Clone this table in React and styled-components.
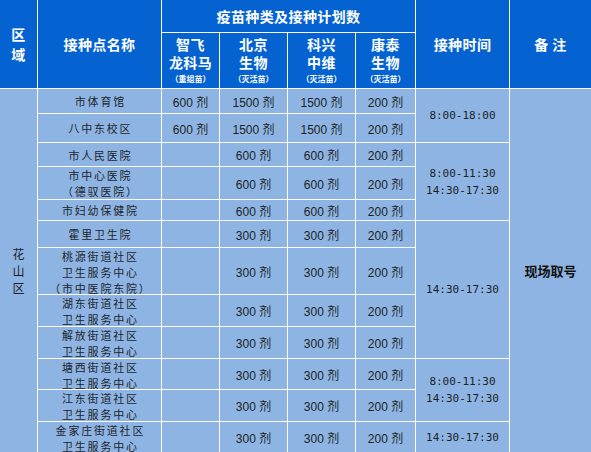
import React from "react";
import styled, { createGlobalStyle } from "styled-components";

const GlobalStyle = createGlobalStyle`
  html, body {
    margin: 0;
    padding: 0;
    background: #ffffff;
  }
  body {
    font-family: "Noto Sans CJK SC", "Noto Sans", sans-serif;
  }
`;

const BLUE = "#0563d1";
const LIGHT = "#8db4e2";

const rows = [
  { name: ["市体育馆"], zf: "600 剂", bj: "1500 剂", kx: "1500 剂", kt: "200 剂", time: { rows: 2, lines: ["8:00-18:00"] } },
  { name: ["八中东校区"], zf: "600 剂", bj: "1500 剂", kx: "1500 剂", kt: "200 剂" },
  { name: ["市人民医院"], bj: "600 剂", kx: "600 剂", kt: "200 剂", time: { rows: 3, lines: ["8:00-11:30", "14:30-17:30"] } },
  { name: ["市中心医院", "（德驭医院）"], bj: "600 剂", kx: "600 剂", kt: "200 剂" },
  { name: ["市妇幼保健院"], bj: "600 剂", kx: "600 剂", kt: "200 剂" },
  { name: ["霍里卫生院"], bj: "300 剂", kx: "300 剂", kt: "200 剂", time: { rows: 4, lines: ["14:30-17:30"] } },
  { name: ["桃源街道社区", "卫生服务中心", "（市中医院东院）"], bj: "300 剂", kx: "300 剂", kt: "200 剂" },
  { name: ["湖东街道社区", "卫生服务中心"], bj: "300 剂", kx: "300 剂", kt: "200 剂" },
  { name: ["解放街道社区", "卫生服务中心"], bj: "300 剂", kx: "300 剂", kt: "200 剂" },
  { name: ["塘西街道社区", "卫生服务中心"], bj: "300 剂", kx: "300 剂", kt: "200 剂", time: { rows: 2, lines: ["8:00-11:30", "14:30-17:30"] } },
  { name: ["江东街道社区", "卫生服务中心"], bj: "300 剂", kx: "300 剂", kt: "200 剂" },
  { name: ["金家庄街道社区", "卫生服务中心"], bj: "300 剂", kx: "300 剂", kt: "200 剂", time: { rows: 1, lines: ["14:30-17:30"] } },
];

const vaccines = [
  { top: "智飞", bottom: "龙科马", kind: "（重组苗）" },
  { top: "北京", bottom: "生物", kind: "（灭活苗）" },
  { top: "科兴", bottom: "中维", kind: "（灭活苗）" },
  { top: "康泰", bottom: "生物", kind: "（灭活苗）" },
];

const Lines = ({ lines }) =>
  lines.map((l, i) => (
    <React.Fragment key={i}>
      {i > 0 && <br />}
      {l}
    </React.Fragment>
  ));

export default function App() {
  return (
    <>
      <GlobalStyle />
      <Grid>
        <HeadCell $rows={2} $lh={20}>区<br />域</HeadCell>
        <HeadCell $rows={2}>接种点名称</HeadCell>
        <HeadCell $cols={4}>疫苗种类及接种计划数</HeadCell>
        <HeadCell $rows={2}>接种时间</HeadCell>
        <HeadCell $rows={2}>备&nbsp;注</HeadCell>
        {vaccines.map((v) => (
          <HeadCell key={v.top + v.bottom} $lh={18}>
            {v.top}
            <br />
            {v.bottom}
            <Kind>{v.kind}</Kind>
          </HeadCell>
        ))}

        {rows.map((r, i) => (
          <React.Fragment key={i}>
            {i === 0 && (
              <AreaCell $rows={rows.length}>花<br />山<br />区</AreaCell>
            )}
            <NameCell>
              <Lines lines={r.name} />
            </NameCell>
            <NumCell>{r.zf || ""}</NumCell>
            <NumCell>{r.bj}</NumCell>
            <NumCell>{r.kx}</NumCell>
            <NumCell>{r.kt}</NumCell>
            {r.time && (
              <TimeCell $rows={r.time.rows}>
                <Lines lines={r.time.lines} />
              </TimeCell>
            )}
            {i === 0 && <NoteCell $rows={rows.length}>现场取号</NoteCell>}
          </React.Fragment>
        ))}
      </Grid>
    </>
  );
}

const Grid = styled.div`
  display: grid;
  width: 591px;
  height: 452px;
  overflow: hidden;
  grid-template-columns: 37px 123px 57px 67px 67px 59px 93px 81px;
  grid-template-rows: 32px 55px 24px 28px 23px 32px 20px 26px 46px 31px 31px 30px 31px 30px;
  gap: 1px;
  background: #ffffff;
`;

const Cell = styled.div`
  display: flex;
  flex-direction: column;
  align-items: center;
  justify-content: center;
  text-align: center;
  white-space: nowrap;
  background: ${LIGHT};
  color: #1d1f26;
  grid-column: span ${(p) => p.$cols || 1};
  grid-row: span ${(p) => p.$rows || 1};
`;

const HeadCell = styled(Cell)`
  display: block;
  align-content: center;
  background: ${BLUE};
  color: #ffffff;
  font-size: 14px;
  font-weight: 700;
  line-height: ${(p) => p.$lh || 18}px;
  letter-spacing: 0.4px;
`;

const Kind = styled.div`
  font-size: 8px;
  line-height: 14px;
  font-weight: 700;
  letter-spacing: 0;
  margin-top: 1px;
`;

const AreaCell = styled(Cell)`
  display: block;
  align-content: center;
  font-size: 12px;
  line-height: 17px;
`;

const NameCell = styled(Cell)`
  display: block;
  align-content: center;
  font-size: 11px;
  line-height: 16px;
  letter-spacing: 1.8px;
  padding-left: 1.8px;
  color: #23252c;
`;

const NumCell = styled(Cell)`
  font-family: "Liberation Sans", "Noto Sans CJK SC", sans-serif;
  font-size: 12px;
`;

const TimeCell = styled(Cell)`
  display: block;
  align-content: center;
  font-family: "DejaVu Sans Mono", "Liberation Mono", monospace;
  font-size: 11px;
  line-height: 17px;
`;

const NoteCell = styled(Cell)`
  font-size: 13px;
  font-weight: 700;
  color: #111111;
`;
